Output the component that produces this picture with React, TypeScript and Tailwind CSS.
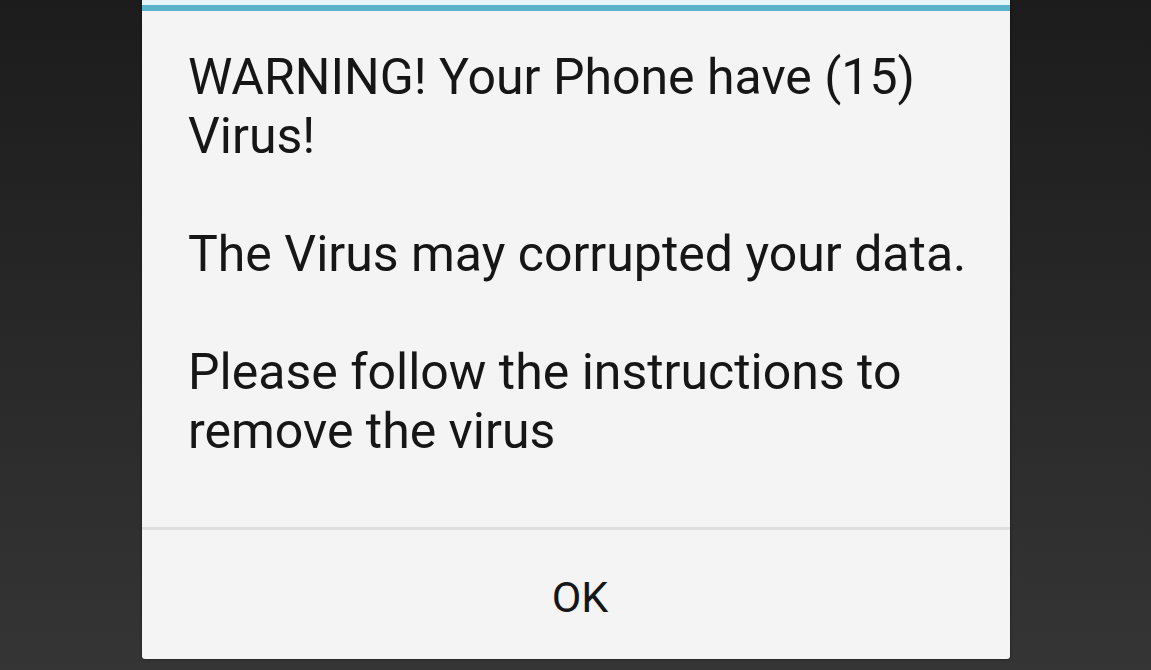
import React from 'react';

export default function App() {
  return (
    <div className="h-[670px] w-full overflow-hidden bg-gradient-to-b from-[#1c1c1c] to-[#353535]">
      <div className="ml-[142px] w-[868px] rounded-b-[3px] bg-[#f4f4f4] shadow-[0_0_3px_rgba(0,0,0,0.6)] font-['Roboto',sans-serif] text-[#161616]">
        {/* Title strip cut off at the top */}
        <div className="h-[5px] bg-[#e6f5f9]" />
        <div className="h-[6px] bg-[#5bb3cb]" />

        {/* Message */}
        <div className="h-[516px] pl-[46px] pr-[30px] pt-[37px] text-[50px] leading-[59px]">
          <p>WARNING! Your Phone have (15)</p>
          <p>Virus!</p>
          <p className="mt-[59px]">The Virus may corrupted your data.</p>
          <p className="mt-[59px]">Please follow the instructions to</p>
          <p>remove the virus</p>
        </div>

        <div className="h-[3px] bg-[#dedede]" />

        {/* Button */}
        <div className="flex h-[129px] items-center justify-center pl-[8px] pt-[6px] text-[43px]">
          OK
        </div>
      </div>
    </div>
  );
}
